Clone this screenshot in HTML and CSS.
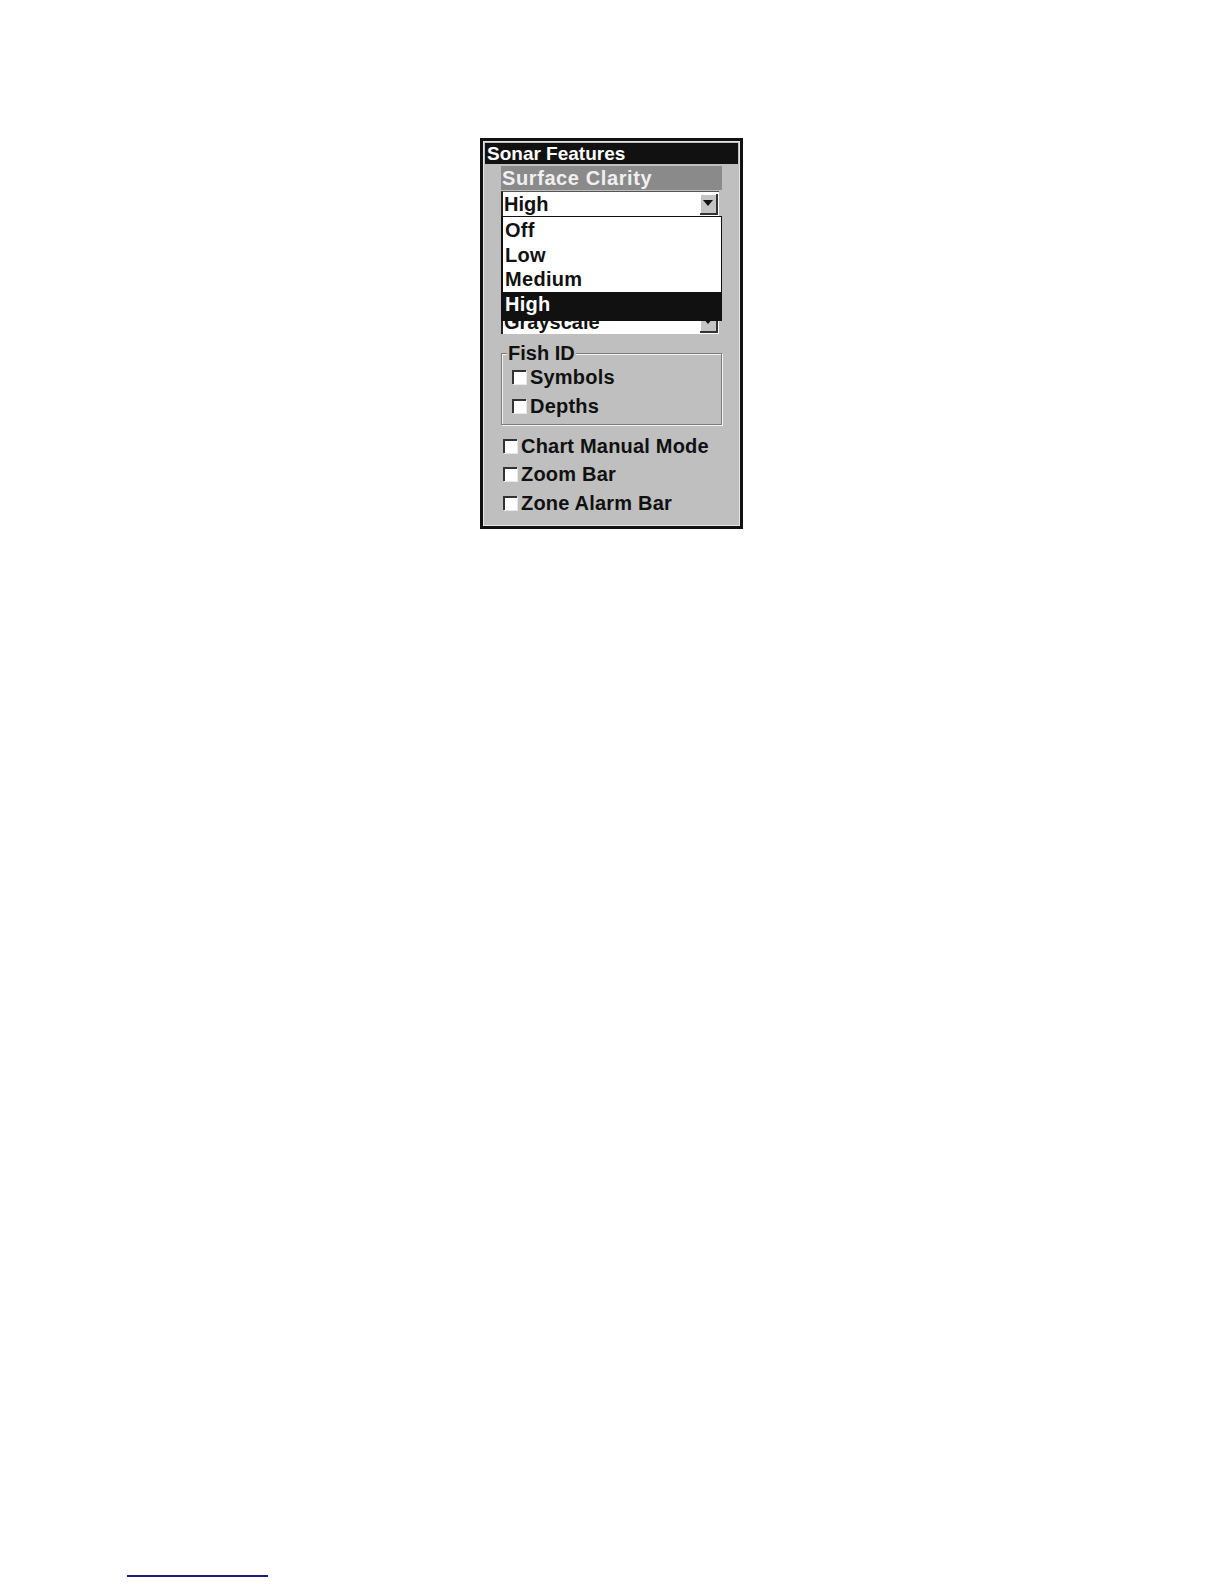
FILE: index.html
```html
<!DOCTYPE html>
<html lang="en">
<head>
<meta charset="utf-8">
<title>Sonar Features</title>
<link rel="stylesheet" href="styles.css">
</head>
<body>
<div class="page">
  <div class="panel">
    <div class="title">Sonar Features</div>
    <div class="content">
      <div class="section-head">Surface Clarity</div>
      <div class="combo">
        <span class="combo-value">High</span>
        <span class="combo-btn"><span class="arrow"></span></span>
      </div>
      <div class="section-head hidden-head">Color Mode</div>
      <div class="combo combo-second">
        <span class="combo-value">Grayscale</span>
        <span class="combo-btn"><span class="arrow"></span></span>
      </div>

      <ul class="popup">
        <li class="opt">Off</li>
        <li class="opt">Low</li>
        <li class="opt">Medium</li>
        <li class="opt selected">High</li>
      </ul>

      <fieldset class="group">
        <legend class="group-label">Fish ID</legend>
        <div class="check-row"><span class="box"></span><span class="label">Symbols</span></div>
        <div class="check-row"><span class="box"></span><span class="label">Depths</span></div>
      </fieldset>

      <div class="checks">
        <div class="check-row"><span class="box"></span><span class="label">Chart Manual Mode</span></div>
        <div class="check-row"><span class="box"></span><span class="label">Zoom Bar</span></div>
        <div class="check-row"><span class="box"></span><span class="label">Zone Alarm Bar</span></div>
      </div>
    </div>
  </div>
  <div class="footer-rule"></div>
</div>
</body>
</html>
```
FILE: styles.css
```css
* { box-sizing: border-box; }

html, body {
  margin: 0;
  padding: 0;
  background: #ffffff;
}

.page {
  width: 1224px;
  height: 1584px;
  padding-top: 138px;
  font-family: "Liberation Sans", Arial, sans-serif;
  font-weight: bold;
  color: #111111;
}

.panel {
  margin-left: 480px;
  width: 263px;
  height: 391px;
  border: 3px solid #111111;
  background: #bfbfbf;
  padding: 2px 2px 0 2px;
  box-shadow: inset -1px -1px 0 #e6e6e6, inset 1px 1px 0 #e6e6e6;
}

.title {
  height: 21px;
  background: #111111;
  color: #ffffff;
  font-size: 19px;
  line-height: 21px;
  padding-left: 2px;
}

.content {
  position: relative;
  padding: 2px 16px 0 16px;
}

.section-head {
  height: 24px;
  background: #8a8a8a;
  color: #f0f0f0;
  font-size: 20px;
  line-height: 24px;
  padding-left: 1px;
  letter-spacing: 0.6px;
}

.hidden-head {
  margin-top: 68px;
}

.combo {
  position: relative;
  display: flex;
  align-items: center;
  height: 25px;
  margin-top: 1px;
  margin-right: 3px;
  background: #ffffff;
  border-left: 2px solid #222222;
  border-top: 1px solid #555555;
}

.combo-value {
  font-size: 20px;
  line-height: 24px;
  padding-left: 1px;
  flex: 1;
}

.combo-second .combo-value {
  line-height: 22px;
}

.combo-btn {
  display: flex;
  align-items: center;
  justify-content: center;
  width: 18px;
  height: 21px;
  margin-right: 1px;
  background: #c4c4c4;
  border-right: 2px solid #333333;
  border-bottom: 2px solid #333333;
  box-shadow: inset 1px 1px 0 #ffffff;
}

.arrow {
  width: 0;
  height: 0;
  border-left: 5px solid transparent;
  border-right: 5px solid transparent;
  border-top: 6px solid #111111;
}

.popup {
  position: absolute;
  top: 52px;
  left: 16px;
  width: 221px;
  height: 105px;
  margin: 0;
  padding: 1px 0 0 0;
  list-style: none;
  background: #ffffff;
  border: 1px solid #111111;
  border-left: 2px solid #111111;
  display: flex;
  flex-direction: column;
}

.opt {
  height: 24.5px;
  font-size: 20px;
  line-height: 24px;
  padding-left: 2px;
  letter-spacing: 0.3px;
}

.opt.selected {
  flex: 1;
  background: #111111;
  color: #ffffff;
  line-height: 24px;
}

.group {
  margin: 10px 0 0 0;
  padding: 1px 0 4px 10px;
  border: 1px solid #7c7c7c;
  box-shadow: inset 1px 1px 0 #f4f4f4, 1px 1px 0 #f4f4f4;
  min-width: 0;
}

.group-label {
  padding: 0 1px;
  margin-left: -5px;
  font-size: 20px;
  line-height: 18px;
  background: #bfbfbf;
}

.checks {
  margin-top: 6px;
  padding-left: 2px;
}

.check-row {
  display: flex;
  align-items: center;
  height: 28.7px;
  gap: 4px;
}

.box {
  width: 14px;
  height: 14px;
  background: #ffffff;
  border-left: 2px solid #333333;
  border-top: 2px solid #333333;
  box-shadow: 1px 1px 0 #e8e8e8;
  flex: none;
}

.label {
  font-size: 20px;
  line-height: 24px;
  letter-spacing: 0.2px;
}

.footer-rule {
  margin-top: 1046px;
  margin-left: 127px;
  width: 141px;
  height: 2px;
  background: #1c1c7c;
}
```
